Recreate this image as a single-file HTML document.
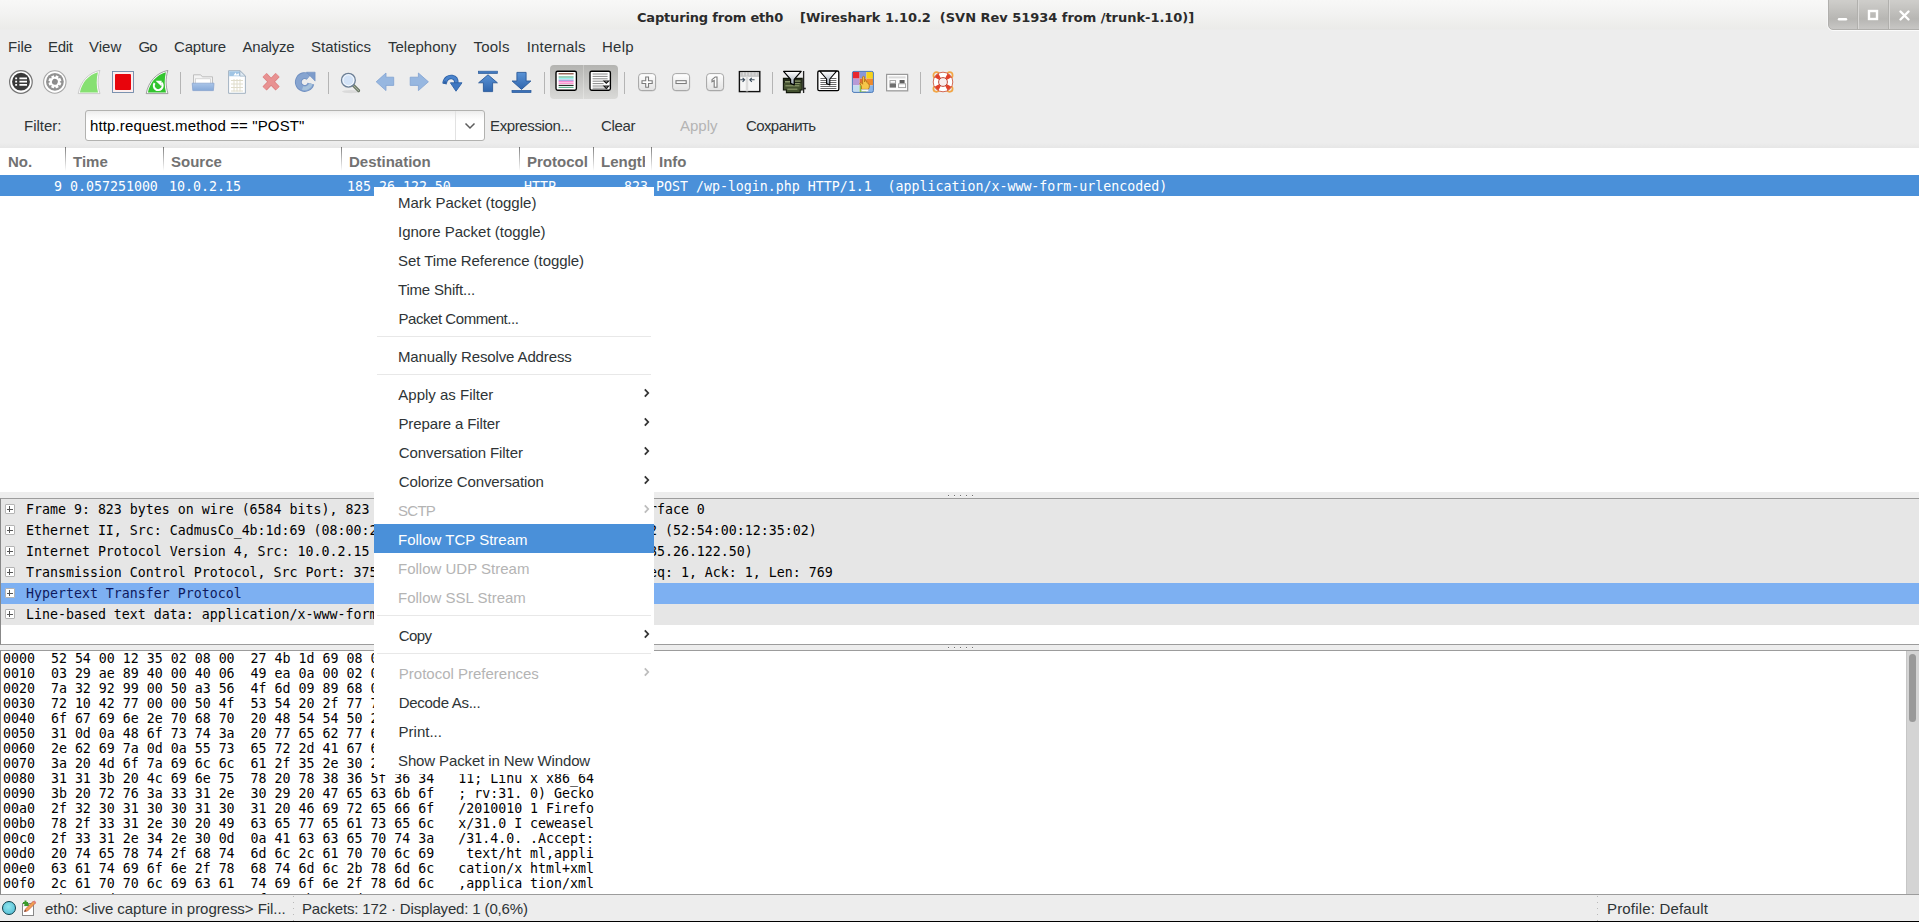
<!DOCTYPE html>
<html><head><meta charset="utf-8"><title>Wireshark</title>
<style>
html,body{margin:0;padding:0;}
body{width:1919px;height:922px;overflow:hidden;background:#ededed;position:relative;font-family:"Liberation Sans",sans-serif;font-size:15px;color:#2e3436;}
.a{position:absolute;white-space:pre;}
.t{position:absolute;white-space:pre;line-height:20px;height:20px;}
.m{position:absolute;white-space:pre;font-family:"DejaVu Sans Mono","Liberation Mono",monospace;font-size:13.288px;line-height:15px;color:#000;}
#titlebar{left:0;top:0;width:1919px;height:60px;background:linear-gradient(#f8f8f7 0px,#f3f3f2 13px,#ebebe9 29px,#ededed 30px,#ededed 60px);}
.title{font-family:"DejaVu Sans","Liberation Sans",sans-serif;font-weight:700;font-size:13px;color:#2b2b2b;top:7.5px;}
#wbtn{left:1828px;top:-6px;width:100px;height:36px;border-radius:5px;background:linear-gradient(#cecdca 6px,#b7b6b3 24px,#c9c8c6 35px);border:1px solid #b0afac;box-sizing:border-box;box-shadow:0 1px 0 #fafafa,-1px 0 0 #f6f6f6;}
.hdr{font-weight:700;color:#727272;top:152px;}
.cs{position:absolute;top:147px;width:1px;height:24px;background:linear-gradient(rgba(70,70,70,.7),rgba(110,110,110,.35) 60%,rgba(160,160,160,0));}
.sep{position:absolute;top:72px;width:1px;height:22px;background:#b4b4b4;}
.ic{position:absolute;top:70px;width:24px;height:24px;overflow:visible;}
.mi{left:398px;}
.dis{color:#b4b4b4;}
.ms{position:absolute;left:377px;width:274px;height:1px;background:#e8e8e8;}
.arr{position:absolute;left:643px;width:7px;height:10px;}
.dr{position:absolute;left:1px;width:1918px;height:21px;background:#e6e6e6;}
.dt{position:absolute;left:26px;white-space:pre;font-family:"DejaVu Sans Mono","Liberation Mono",monospace;font-size:13.288px;line-height:21px;height:21px;color:#000;}
.ex{position:absolute;left:4.5px;width:10px;height:10px;box-sizing:border-box;border:1px solid #b4b4b4;background:#fff;border-radius:1px;}
.ex:before{content:"";position:absolute;left:1px;top:3.5px;width:6px;height:1px;background:#555;}
.ex:after{content:"";position:absolute;left:3.5px;top:1px;width:1px;height:6px;background:#555;}
.hd{position:absolute;width:1px;height:1px;background:#6e6e6e;box-shadow:0 1px 0 #fafafa;}
</style></head><body>
<!-- TITLE BAR -->
<div class="a" id="titlebar"></div>
<div class="t title" style="left:637px;letter-spacing:-0.18px">Capturing from eth0</div>
<div class="t title" style="left:800px;letter-spacing:-0.03px">[Wireshark 1.10.2  (SVN Rev 51934 from /trunk-1.10)]</div>
<div class="a" id="wbtn"></div>
<div class="a" style="left:1857px;top:0;width:1px;height:29px;background:#b1b0ad"></div>
<div class="a" style="left:1858px;top:0;width:1px;height:29px;background:#d8d7d5"></div>
<div class="a" style="left:1888px;top:0;width:1px;height:29px;background:#b1b0ad"></div>
<div class="a" style="left:1889px;top:0;width:1px;height:29px;background:#d8d7d5"></div>
<svg class="a" style="left:1828px;top:0" width="91" height="29" viewBox="0 0 91 29"><g fill="none" stroke="#fff" stroke-width="2.4"><path d="M11 19.2h7" stroke-linecap="round"/><rect x="41" y="11" width="8" height="8"/><path d="M72.5 11.5l8 8M80.5 11.5l-8 8" stroke-linecap="round"/></g></svg>
<!-- MENU BAR -->
<div class="t" style="top:37px;left:8px">File</div>
<div class="t" style="top:37px;left:48px;letter-spacing:-0.3px">Edit</div>
<div class="t" style="top:37px;left:89px">View</div>
<div class="t" style="top:37px;left:138.5px;letter-spacing:-0.9px">Go</div>
<div class="t" style="top:37px;left:174px;letter-spacing:-0.2px">Capture</div>
<div class="t" style="top:37px;left:242.5px;letter-spacing:-0.2px">Analyze</div>
<div class="t" style="top:37px;left:311px">Statistics</div>
<div class="t" style="top:37px;left:388px">Telephony</div>
<div class="t" style="top:37px;left:473.5px;letter-spacing:0.22px">Tools</div>
<div class="t" style="top:37px;left:526.8px;letter-spacing:0.15px">Internals</div>
<div class="t" style="top:37px;left:602px;letter-spacing:0.25px">Help</div>
<!-- TOOLBAR -->
<svg width="0" height="0" style="position:absolute"><defs>
<linearGradient id="gb" x1="0" y1="0" x2="0" y2="1"><stop offset="0" stop-color="#5a93d6"/><stop offset="1" stop-color="#2f65ad"/></linearGradient>
<linearGradient id="gl" x1="0" y1="0" x2="0" y2="1"><stop offset="0" stop-color="#a9c4e8"/><stop offset="1" stop-color="#86a9d8"/></linearGradient>
<linearGradient id="gz" x1="0" y1="0" x2="0" y2="1"><stop offset="0" stop-color="#ffffff"/><stop offset="1" stop-color="#e2e2e2"/></linearGradient>
<linearGradient id="gf" x1="0" y1="0" x2="0" y2="1"><stop offset="0" stop-color="#ffffff"/><stop offset="1" stop-color="#9aa6b4"/></linearGradient>
<linearGradient id="gt" x1="0" y1="0" x2="0" y2="1"><stop offset="0" stop-color="#b4b4b1"/><stop offset="1" stop-color="#d9d9d7"/></linearGradient>
</defs></svg>
<!-- 1 interfaces -->
<svg class="ic" style="left:9px" viewBox="0 0 24 24"><circle cx="11.9" cy="12" r="11.3" fill="#fff" stroke="#757575" stroke-width="1.2"/><circle cx="12" cy="11.7" r="8.9" fill="#393939"/><g stroke="#fff" stroke-width="1.8"><path d="M10.4 8.3h7.6M10.4 11.6h7.6M10.4 14.8h7.6"/><path d="M6.2 8.3h1.9M6.2 11.6h1.9M6.2 14.8h1.9"/></g></svg>
<!-- 2 options -->
<svg class="ic" style="left:43px" viewBox="0 0 24 24"><circle cx="11.8" cy="12" r="11.2" fill="#fff" stroke="#a6a6a6" stroke-width="1.1"/><circle cx="11.9" cy="11.8" r="8.9" fill="#929292"/><g transform="translate(11.9 11.8) rotate(22.5)"><g fill="#fff"><circle r="4.9"/><rect x="-1.5" y="-6.5" width="3" height="13" rx="0.5"/><rect x="-1.5" y="-6.5" width="3" height="13" rx="0.5" transform="rotate(45)"/><rect x="-1.5" y="-6.5" width="3" height="13" rx="0.5" transform="rotate(90)"/><rect x="-1.5" y="-6.5" width="3" height="13" rx="0.5" transform="rotate(135)"/></g><circle r="2.9" fill="#8c8c8c"/></g></svg>
<!-- 3 start (insensitive) -->
<svg class="ic" style="left:77px" viewBox="0 0 24 24"><path d="M1.2 23.6C3.4 11.6 11.6 2.6 22.9 0.4C20.4 8.4 20.6 16 23 23.6Z" fill="#fafafa" stroke="#c2c2c2" stroke-width="0.8"/><path d="M2.9 22.4C5 12.4 11.6 4.8 20.9 2.2C19.2 9.4 19.4 16.2 21 22.4Z" fill="#86e072"/></svg>
<!-- 4 stop -->
<svg class="ic" style="left:111px" viewBox="0 0 24 24"><rect x="1.5" y="1.5" width="21" height="21" fill="#fbeeee" stroke="#6f88a8" stroke-width="0.9"/><rect x="4" y="4" width="16" height="16" rx="1" fill="#e8040c"/></svg>
<!-- 5 restart -->
<svg class="ic" style="left:145px" viewBox="0 0 24 24"><path d="M1.2 23.6C3.4 11.6 11.6 2.6 22.9 0.4C20.4 8.4 20.6 16 23 23.6Z" fill="#fafafa" stroke="#8c8c8c" stroke-width="0.8"/><path d="M2.9 22.4C5 12.4 11.6 4.8 20.9 2.2C19.2 9.4 19.4 16.2 21 22.4Z" fill="#33c42f"/><path d="M9.6 13.2a4.4 4.4 0 1 0 7 -0.4" fill="none" stroke="#fff" stroke-width="2.1"/><path d="M10.6 10.8h6v5.8z" fill="#fff"/></svg>
<div class="sep" style="left:180px"></div>
<!-- 6 open -->
<svg class="ic" style="left:191px" viewBox="0 0 24 24"><path d="M2.5 20V4.8h7.2l1.6 2h10.2V20z" fill="#f3f3f3" stroke="#b9b9b9" stroke-width="0.9"/><rect x="4.6" y="8.8" width="15" height="6" fill="#fff" stroke="#c8c8c8" stroke-width="0.7"/><path d="M1.2 13.2h21.8l-0.6 7.4H1.8z" fill="url(#gl)" stroke="#8aa6d0" stroke-width="0.8"/></svg>
<!-- 7 save -->
<svg class="ic" style="left:225px" viewBox="0 0 24 24"><path d="M3.6 0.7h11.4l5.4 5.2V23.3H3.6z" fill="#fff" stroke="#9ab" stroke-width="0.9"/><path d="M4.2 1.2h10.6l5 5H4.2z" fill="#9fc4e4"/><path d="M8.5 5.5l2-3l1.3 2.2l1.5-1.7l1 2.5z" fill="#fff"/><path d="M15 0.9v5.2h5.2z" fill="#dfeaf4" stroke="#9ab" stroke-width="0.6"/><g stroke="#e0ddcc" stroke-width="1"><path d="M6 10.5h12M6 14h12M6 17.5h12M6 21h12"/><path d="M9 9v12.5M12 9v12.5M15 9v12.5"/></g></svg>
<!-- 8 close -->
<svg class="ic" style="left:259px" viewBox="0 0 24 24"><path d="M5.6 5l13 13.4M18.6 5L5.6 18.4" stroke="#dc8080" stroke-width="5.8" stroke-linecap="butt"/><path d="M5.6 5l13 13.4M18.6 5L5.6 18.4" stroke="#e89292" stroke-width="4.2" stroke-linecap="butt"/></svg>
<!-- 9 reload -->
<svg class="ic" style="left:293px" viewBox="0 0 24 24"><path d="M15.8 7.1A6.4 6.4 0 1 0 17.9 13.7" fill="none" stroke="#6f8fc0" stroke-width="6.8"/><path d="M15.8 7.1A6.4 6.4 0 1 0 17.9 13.7" fill="none" stroke="#86a4d0" stroke-width="5.2"/><path d="M13.4 2.2h8.7v8.9z" fill="#7d9ccb" stroke="#6f8fc0" stroke-width="0.6"/><path d="M9.6 18A6.4 6.4 0 0 0 17.9 13.7" fill="none" stroke="#b4cfe0" stroke-width="3.6" opacity="0.7"/></svg>
<div class="sep" style="left:328px"></div>
<!-- 10 find -->
<svg class="ic" style="left:338px" viewBox="0 0 24 24"><ellipse cx="13" cy="21.6" rx="9" ry="1.6" fill="#000" opacity="0.08"/><path d="M15.4 15.4l5.2 5.2" stroke="#5e6b5a" stroke-width="3" stroke-linecap="round"/><path d="M15.4 15.4l5.2 5.2" stroke="#a9b3a0" stroke-width="1.1" stroke-linecap="round"/><circle cx="10.4" cy="10.2" r="6.9" fill="#d3e3f7" stroke="#6d7f94" stroke-width="1.3"/><circle cx="10.4" cy="10.2" r="5.4" fill="none" stroke="#fff" stroke-width="1" opacity="0.8"/></svg>
<!-- 11 back -->
<svg class="ic" style="left:373px" viewBox="0 0 24 24"><path d="M3.2 11.8L13 3V7.2h7.7v8.2H13V20.6z" fill="#97b7e0" stroke="#80a2d2" stroke-width="0.8" stroke-linejoin="round"/></svg>
<!-- 12 forward -->
<svg class="ic" style="left:407px" viewBox="0 0 24 24"><path d="M21.4 11.8L11.4 3V7.2H3.2v8.2h8.2V20.6z" fill="#97b7e0" stroke="#80a2d2" stroke-width="0.8" stroke-linejoin="round"/></svg>
<!-- 13 jump -->
<svg class="ic" style="left:440px" viewBox="0 0 24 24"><path d="M4.6 13.4C5.2 8 9 6.6 12 7C15.2 7.6 16.6 10 16.4 13.5" fill="none" stroke="#2f62a6" stroke-width="4.6"/><path d="M4.6 13.4C5.2 8 9 6.6 12 7C15.2 7.6 16.6 10 16.4 13.5" fill="none" stroke="#4a83cc" stroke-width="2.8"/><path d="M10.4 12.8h11.6l-6 8.4z" fill="#3f78c2" stroke="#2f62a6" stroke-width="0.9"/><path d="M2.6 13.6l2.6-3.4l1.6 4.4z" fill="#2f62a6"/></svg>
<!-- 14 top -->
<svg class="ic" style="left:476px" viewBox="0 0 24 24"><rect x="2.4" y="1.2" width="19" height="2.2" fill="url(#gb)" stroke="#2a5a9a" stroke-width="0.7"/><path d="M12 4.8l9.4 8h-4.8v8.8H7.4v-8.8H2.6z" fill="url(#gb)" stroke="#2a5a9a" stroke-width="0.9"/></svg>
<!-- 15 bottom -->
<svg class="ic" style="left:509px" viewBox="0 0 24 24"><rect x="3" y="20.4" width="19" height="2.2" fill="#3a70b8" stroke="#2a5a9a" stroke-width="0.7"/><path d="M12.5 19.4l-9.4-8.4h4.8V2.4h9.2V11h4.8z" fill="url(#gb)" stroke="#2a5a9a" stroke-width="0.9"/></svg>
<div class="sep" style="left:544px"></div>
<!-- toggles bg -->
<div class="a" style="left:550px;top:65px;width:33px;height:34px;border-radius:4px 0 0 4px;background:linear-gradient(#b4b4b1,#dadad8)"></div>
<div class="a" style="left:584px;top:65px;width:34px;height:34px;border-radius:0 4px 4px 0;background:linear-gradient(#b4b4b1,#dadad8)"></div>
<div class="a" style="left:583px;top:65px;width:1px;height:34px;background:linear-gradient(#c6c6c3,#e4e4e2)"></div>
<!-- 16 colorize -->
<svg class="ic" style="left:554px" viewBox="0 0 24 24"><rect x="2" y="1.2" width="20.4" height="19" rx="1.6" fill="#fff" stroke="#000" stroke-width="1.35"/><g stroke-width="1.15"><path d="M4.6 3.8h15" stroke="#7a3b2a"/><path d="M4.6 7h15" stroke="#4daf8a"/><path d="M4.6 8.6h15" stroke="#9af0ee"/><path d="M4.6 10.2h15" stroke="#8f8fd6"/><path d="M4.6 11.8h15" stroke="#f56ac8"/><path d="M4.6 13.4h15" stroke="#fb9ad0"/><path d="M4.6 15.4h15" stroke="#2a2a2a"/><path d="M4.6 17.4h15" stroke="#63b594"/></g></svg>
<!-- 17 autoscroll -->
<svg class="ic" style="left:588px" viewBox="0 0 24 24"><rect x="2" y="1.2" width="20.4" height="19" rx="1.6" fill="#fff" stroke="#000" stroke-width="1.35"/><g stroke="#7a7a7a" stroke-width="0.9"><path d="M4.6 4h15M4.6 6.4h15M4.6 8.8h15M4.6 11.2h11M4.6 13.6h11M4.6 16h11M4.6 18.2h15"/></g><path d="M14.6 10.4h7.4l-3.7 3.6zM14.6 15.6h7.4l-3.7 3.6z" fill="#111"/><path d="M17 11.3h2.6l-1.3 1.3zM17 16.5h2.6l-1.3 1.3z" fill="#999"/></svg>
<div class="sep" style="left:624px"></div>
<!-- 18 zoom in -->
<svg class="ic" style="left:635px" viewBox="0 0 24 24"><rect x="3.6" y="4.4" width="17" height="17" rx="3.2" fill="#cfcfcf" opacity="0.6"/><rect x="3.6" y="3.6" width="17" height="17" rx="3.2" fill="url(#gz)" stroke="#9c9c9c" stroke-width="0.9"/><path d="M10.7 7h2.8v3.7h3.7v2.8h-3.7v3.7h-2.8v-3.7H7v-2.8h3.7z" fill="#fff" stroke="#7c7c7c" stroke-width="1.1"/></svg>
<!-- 19 zoom out -->
<svg class="ic" style="left:669px" viewBox="0 0 24 24"><rect x="3.6" y="4.4" width="17" height="17" rx="3.2" fill="#cfcfcf" opacity="0.6"/><rect x="3.6" y="3.6" width="17" height="17" rx="3.2" fill="url(#gz)" stroke="#9c9c9c" stroke-width="0.9"/><rect x="7" y="10.7" width="10.2" height="2.8" fill="#fff" stroke="#7c7c7c" stroke-width="1.1"/></svg>
<!-- 20 zoom 100 -->
<svg class="ic" style="left:703px" viewBox="0 0 24 24"><rect x="3.6" y="4.4" width="17" height="17" rx="3.2" fill="#cfcfcf" opacity="0.6"/><rect x="3.6" y="3.6" width="17" height="17" rx="3.2" fill="url(#gz)" stroke="#9c9c9c" stroke-width="0.9"/><path d="M9 9.6l3.2-2.6h1.8v10.2h-2.8V10.4l-2.2 1.4z" fill="#fff" stroke="#7c7c7c" stroke-width="1.1"/></svg>
<!-- 21 resize columns -->
<svg class="ic" style="left:737px" viewBox="0 0 24 24"><rect x="2.4" y="1.6" width="20.4" height="20" fill="#f6f6f6" stroke="#111" stroke-width="1.4"/><rect x="3.2" y="2.4" width="18.8" height="3.4" fill="#c4c4c4"/><g stroke="#e9e9e9" stroke-width="0.8"><path d="M6.4 2.4v3.4M9.6 2.4v3.4M12.8 2.4v3.4M16 2.4v3.4M19.2 2.4v3.4"/></g><path d="M3.2 6.2h18.8" stroke="#a8a8a8" stroke-width="0.8"/><path d="M10 6.4v15" stroke="#dcdcdc" stroke-width="2.4"/><g stroke="#3c4c5c" stroke-width="1.1" fill="none"><path d="M3.2 9.8h4.4M5.6 7.8l2 2l-2 2"/><path d="M17.6 9.8h-4.4M14.8 7.8l-2 2l2 2"/></g></svg>
<div class="sep" style="left:772px"></div>
<!-- 22 capture filters -->
<svg class="ic" style="left:782px" viewBox="0 0 24 24"><path d="M21.6 1v22" stroke="#222" stroke-width="1.3"/><path d="M21.8 18.5h2" stroke="#222" stroke-width="1.6"/><path d="M1.4 8.4h18.8v11.6h-2v2.6H4.4v-2.6H1.4z" fill="#43512f" stroke="#10160a" stroke-width="1.1"/><path d="M2 9h17.6v4H2z" fill="#232b1a"/><g fill="#8a976a"><rect x="3" y="11" width="5" height="1.6"/><rect x="12.6" y="10.4" width="6" height="1.4"/><rect x="3.4" y="15.2" width="14" height="1.2"/><rect x="5.4" y="18.6" width="10" height="1.2"/><rect x="12.8" y="13" width="5" height="1"/></g><path d="M1.6 1.4h17.6l-7 8v5.6l-3.6 -1.6v-4z" fill="url(#gf)" stroke="#000" stroke-width="1.2" stroke-linejoin="round"/></svg>
<!-- 23 display filters -->
<svg class="ic" style="left:816px" viewBox="0 0 24 24"><rect x="1.8" y="1" width="21" height="19.6" rx="1.4" fill="#fff" stroke="#000" stroke-width="1.3"/><g stroke="#6a6a6a" stroke-width="1"><path d="M4.4 8.5h16M4.4 10.5h16M4.4 12.5h16M4.4 14.5h16M4.4 16.5h16M4.4 18.5h16"/></g><path d="M3.8 1.2h16.8l-6.8 7.8v6l-3.2 -1.4v-4.6z" fill="url(#gf)" stroke="#000" stroke-width="1.1" stroke-linejoin="round"/></svg>
<!-- 24 coloring rules -->
<svg class="ic" style="left:850px" viewBox="0 0 24 24"><rect x="2.4" y="1.4" width="21" height="21" rx="1.6" fill="#fff"/><rect x="2.8" y="1.8" width="6.8" height="6.8" fill="#e8262e"/><rect x="9.6" y="1.8" width="6.8" height="6.8" fill="#8a97d8"/><rect x="16.4" y="1.8" width="6.6" height="6.8" fill="#f6d21a"/><rect x="2.8" y="8.6" width="6.8" height="6.8" fill="#b89ad6"/><rect x="9.6" y="8.6" width="6.8" height="6.8" fill="#e06a3a"/><rect x="16.4" y="8.6" width="6.6" height="6.8" fill="#f08a2a"/><rect x="2.8" y="15.4" width="6.8" height="6.8" fill="#c4dcf0"/><rect x="9.6" y="15.4" width="6.8" height="6.8" fill="#86c94a"/><rect x="16.4" y="15.4" width="6.6" height="6.8" fill="#8ab6ea"/><rect x="2.4" y="1.4" width="21" height="21" rx="1.6" fill="none" stroke="#4a78b8" stroke-width="1"/><path d="M11.4 19.4v-3.2l-1.6-3l1.2-0.8l1.6 1.8V6.8q1-1 2 0v5.2l0.4-1.6q0.9-0.5 1.5 0.2v1.6q1-0.4 1.5 0.4v1.4q1-0.2 1.3 0.6v2.6l-1 2.2z" fill="#f6c64a" stroke="#b8741a" stroke-width="0.9" stroke-linejoin="round"/><rect x="11.4" y="19.4" width="7" height="1.8" fill="#fff" stroke="#b8b8c8" stroke-width="0.5"/></svg>
<!-- 25 preferences -->
<svg class="ic" style="left:885px" viewBox="0 0 24 24"><rect x="2.6" y="5.2" width="21" height="16.4" fill="#cfcfcf" opacity="0.5"/><rect x="1.6" y="4.4" width="21" height="16.4" fill="#fcfcfc" stroke="#9a9a9a" stroke-width="1.2"/><rect x="3.6" y="6.4" width="17" height="2" fill="#d9d9d9"/><rect x="5" y="10.6" width="5.6" height="2.6" fill="#fff" stroke="#9a9a9a" stroke-width="0.9"/><rect x="4.6" y="13.6" width="6.4" height="4" fill="#6e6e6e"/><rect x="14.6" y="10" width="5" height="3.4" fill="#5e5e5e"/><rect x="13.6" y="13.8" width="7" height="3.8" fill="#fff" stroke="#9a9a9a" stroke-width="0.9"/></svg>
<div class="sep" style="left:920px"></div>
<!-- 26 help -->
<svg class="ic" style="left:931px" viewBox="0 0 24 24"><g fill="none" stroke="#f2a646" stroke-width="1.7"><circle cx="5.4" cy="5.2" r="3"/><circle cx="18.6" cy="5.2" r="3"/><circle cx="5.4" cy="18.8" r="3"/><circle cx="18.6" cy="18.8" r="3"/></g><circle cx="12" cy="12" r="7.1" fill="none" stroke="#fff" stroke-width="5"/><g fill="none" stroke="#e2402a" stroke-width="5"><path d="M15.44 5.79A7.1 7.1 0 0 1 18.21 8.56"/><path d="M18.21 15.44A7.1 7.1 0 0 1 15.44 18.21"/><path d="M8.56 18.21A7.1 7.1 0 0 1 5.79 15.44"/><path d="M5.79 8.56A7.1 7.1 0 0 1 8.56 5.79"/></g><circle cx="12" cy="12" r="9.8" fill="none" stroke="#d05a44" stroke-width="0.9"/><circle cx="12" cy="12" r="4.4" fill="#f8eeee" stroke="#c04a3a" stroke-width="1"/></svg>
<!-- FILTER BAR -->
<div class="t" style="top:116px;left:24px">Filter:</div>
<div class="a" style="left:85px;top:110px;width:400px;height:31px;box-sizing:border-box;border:1px solid #b2b2b0;border-radius:3px;background:linear-gradient(#ececec,#f6f6f6 4px,#fff 10px,#fff);"></div>
<div class="a" style="left:455px;top:111px;width:1px;height:29px;background:#e2e2e2"></div>
<div class="t" style="top:116px;left:90px;color:#000;letter-spacing:0.13px">http.request.method == "POST"</div>
<svg class="a" style="left:463.7px;top:122px" width="12" height="8" viewBox="0 0 12 8"><path d="M1.5 1.5 L6 6 L10.5 1.5" fill="none" stroke="#5c5c5c" stroke-width="1.5"/></svg>
<div class="t" style="top:116px;left:490px;letter-spacing:-0.37px">Expression...</div>
<div class="t" style="top:116px;left:601px;letter-spacing:-0.35px">Clear</div>
<div class="t dis" style="top:116px;left:680px">Apply</div>
<div class="t" style="top:116px;left:746px;letter-spacing:-0.55px">Сохранить</div>
<!-- PACKET LIST -->
<div class="a" style="left:0;top:143px;width:1919px;height:5px;background:linear-gradient(#ededed,#e6e6e6)"></div>
<div class="a" style="left:0;top:148px;width:1919px;height:344px;background:#fff"></div>
<div class="t hdr" style="left:8px">No.</div>
<div class="t hdr" style="left:73px">Time</div>
<div class="t hdr" style="left:171px">Source</div>
<div class="t hdr" style="left:349px">Destination</div>
<div class="t hdr" style="left:527px">Protocol</div>
<div class="t hdr" style="left:601px;width:43.5px;overflow:hidden">Length</div>
<div class="t hdr" style="left:659px">Info</div>
<div class="cs" style="left:65px"></div>
<div class="cs" style="left:163px"></div>
<div class="cs" style="left:341px"></div>
<div class="cs" style="left:519px"></div>
<div class="cs" style="left:593px"></div>
<div class="cs" style="left:651px"></div>
<div class="a" style="left:0;top:175px;width:1919px;height:21px;background:#4a90d9"></div>
<div class="m" style="left:54px;top:178.5px;color:#fff">9</div>
<div class="m" style="left:70px;top:178.5px;color:#fff">0.057251000</div>
<div class="m" style="left:169px;top:178.5px;color:#fff">10.0.2.15</div>
<div class="m" style="left:347px;top:178.5px;color:#fff">185.26.122.50</div>
<div class="m" style="left:524px;top:178.5px;color:#fff">HTTP</div>
<div class="m" style="left:624px;top:178.5px;color:#fff">823</div>
<div class="m" style="left:656px;top:178.5px;color:#fff">POST /wp-login.php HTTP/1.1  (application/x-www-form-urlencoded)</div>
<!-- DETAILS -->
<div class="hd" style="left:948px;top:495px"></div>
<div class="hd" style="left:948px;top:647px"></div>
<div class="hd" style="left:954px;top:495px"></div>
<div class="hd" style="left:954px;top:647px"></div>
<div class="hd" style="left:960px;top:495px"></div>
<div class="hd" style="left:960px;top:647px"></div>
<div class="hd" style="left:966px;top:495px"></div>
<div class="hd" style="left:966px;top:647px"></div>
<div class="hd" style="left:972px;top:495px"></div>
<div class="hd" style="left:972px;top:647px"></div>
<div class="a" style="left:0;top:498px;width:1919px;height:147px;box-sizing:border-box;border:1px solid #9c9c9c;border-left-color:#888;border-right:none;background:#fff"></div>
<div class="dr" style="top:499px"></div><div class="ex" style="top:504px"></div><div class="dt" style="top:499px">Frame 9: 823 bytes on wire (6584 bits), 823 bytes captured (6584 bits) on interface 0</div>
<div class="dr" style="top:520px"></div><div class="ex" style="top:525px"></div><div class="dt" style="top:520px">Ethernet II, Src: CadmusCo_4b:1d:69 (08:00:27:4b:1d:69), Dst: RealtekU_12:35:02 (52:54:00:12:35:02)</div>
<div class="dr" style="top:541px"></div><div class="ex" style="top:546px"></div><div class="dt" style="top:541px">Internet Protocol Version 4, Src: 10.0.2.15 (10.0.2.15), Dst: 185.26.122.50 (185.26.122.50)</div>
<div class="dr" style="top:562px"></div><div class="ex" style="top:567px"></div><div class="dt" style="top:562px">Transmission Control Protocol, Src Port: 37512 (37512), Dst Port: http (80), Seq: 1, Ack: 1, Len: 769</div>
<div class="dr" style="top:583px;background:#7db0f2"></div><div class="ex" style="top:588px"></div><div class="dt" style="top:583px;color:#0e1a5e">Hypertext Transfer Protocol</div>
<div class="dr" style="top:604px"></div><div class="ex" style="top:609px"></div><div class="dt" style="top:604px">Line-based text data: application/x-www-form-urlencoded</div>
<!-- HEX -->
<div class="a" style="left:0;top:650px;width:1919px;height:245px;box-sizing:border-box;border:1px solid #9c9c9c;border-left-color:#888;border-right:none;background:#fff;overflow:hidden">
<div class="m" style="left:2px;top:0px">0000  52 54 00 12 35 02 08 00  27 4b 1d 69 08 00 45 00   RT..5... &#x27;K.i..E.</div>
<div class="m" style="left:2px;top:15px">0010  03 29 ae 89 40 00 40 06  49 ea 0a 00 02 0f b9 1a   .)..@.@. I.......</div>
<div class="m" style="left:2px;top:30px">0020  7a 32 92 99 00 50 a3 56  4f 6d 09 89 68 02 9e 02   z2...P.V Om..h...</div>
<div class="m" style="left:2px;top:45px">0030  72 10 42 77 00 00 50 4f  53 54 20 2f 77 70 2d 6c   r.Bw..PO ST /wp-l</div>
<div class="m" style="left:2px;top:60px">0040  6f 67 69 6e 2e 70 68 70  20 48 54 54 50 2f 31 2e   ogin.php  HTTP/1.</div>
<div class="m" style="left:2px;top:75px">0050  31 0d 0a 48 6f 73 74 3a  20 77 65 62 77 6f 72 6b   1..Host:  webwork</div>
<div class="m" style="left:2px;top:90px">0060  2e 62 69 7a 0d 0a 55 73  65 72 2d 41 67 65 6e 74   .biz..Us er-Agent</div>
<div class="m" style="left:2px;top:105px">0070  3a 20 4d 6f 7a 69 6c 6c  61 2f 35 2e 30 20 28 58   : Mozill a/5.0 (X</div>
<div class="m" style="left:2px;top:120px">0080  31 31 3b 20 4c 69 6e 75  78 20 78 38 36 5f 36 34   11; Linu x x86_64</div>
<div class="m" style="left:2px;top:135px">0090  3b 20 72 76 3a 33 31 2e  30 29 20 47 65 63 6b 6f   ; rv:31. 0) Gecko</div>
<div class="m" style="left:2px;top:150px">00a0  2f 32 30 31 30 30 31 30  31 20 46 69 72 65 66 6f   /2010010 1 Firefo</div>
<div class="m" style="left:2px;top:165px">00b0  78 2f 33 31 2e 30 20 49  63 65 77 65 61 73 65 6c   x/31.0 I ceweasel</div>
<div class="m" style="left:2px;top:180px">00c0  2f 33 31 2e 34 2e 30 0d  0a 41 63 63 65 70 74 3a   /31.4.0. .Accept:</div>
<div class="m" style="left:2px;top:195px">00d0  20 74 65 78 74 2f 68 74  6d 6c 2c 61 70 70 6c 69    text/ht ml,appli</div>
<div class="m" style="left:2px;top:210px">00e0  63 61 74 69 6f 6e 2f 78  68 74 6d 6c 2b 78 6d 6c   cation/x html+xml</div>
<div class="m" style="left:2px;top:225px">00f0  2c 61 70 70 6c 69 63 61  74 69 6f 6e 2f 78 6d 6c   ,applica tion/xml</div>
<div class="m" style="left:2px;top:241px">0100  3b 71 3d 30 2e 39 2c 2a  2f 2a 3b 71 3d 30 2e 38   ;q=0.9,* /*;q=0.8</div>
</div>
<div class="a" style="left:1906px;top:651px;width:13px;height:243px;background:#d4d4d4;border-left:1px solid #c6c6c6;box-sizing:border-box"></div>
<div class="a" style="left:1909px;top:654px;width:7px;height:68px;border-radius:3.5px;background:#999"></div>
<!-- STATUS BAR -->
<div class="a" style="left:0;top:895px;width:1919px;height:26px;background:#ededed"></div>
<div class="a" style="left:0;top:921px;width:1919px;height:1px;background:#000"></div>
<div class="a" style="left:2px;top:901px;width:14px;height:14px;box-sizing:border-box;border-radius:7px;border:1.3px solid #0c3f4a;background:radial-gradient(circle at 45% 40%,#8fe6ee,#5cc2d8 75%)"></div>
<svg class="a" style="left:20px;top:899px" width="18" height="18" viewBox="0 0 18 18"><rect x="2.5" y="4.5" width="11" height="12" fill="#fff" stroke="#888" /><path d="M3 5h10v3H3z" fill="#eee"/><path d="M4 7l3 -4l3 4" fill="#3a9a2a"/><path d="M5.5 1.5v5M3 4h5" stroke="#3a9a2a" stroke-width="2"/><path d="M4.5 12.5l1-2.5l8-8l2 2l-8 8z" fill="#f0a050" stroke="#c9604a" stroke-width="0.8"/><path d="M13 2.5l1.5-1l1.7 1.7l-1 1.5z" fill="#e08080"/><path d="M4.3 12.7l.7-1.7l1 1z" fill="#222"/></svg>
<div class="t" style="top:899px;left:45px;letter-spacing:-0.05px">eth0: &lt;live capture in progress&gt; Fil...</div>
<div class="t" style="top:899px;left:302px;letter-spacing:-0.15px">Packets: 172 · Displayed: 1 (0,6%)</div>
<div class="t" style="top:899px;left:1607px;letter-spacing:0.17px">Profile: Default</div>
<svg class="a" style="left:292px;top:896px" width="3" height="25" viewBox="0 0 3 25"><g fill="#b9b9b9"><rect x="1" y="0" width="1" height="1"/><rect x="1" y="6" width="1" height="1"/><rect x="1" y="12" width="1" height="1"/><rect x="1" y="18" width="1" height="1"/><rect x="1" y="24" width="1" height="1"/></g></svg>
<svg class="a" style="left:1596px;top:896px" width="3" height="25" viewBox="0 0 3 25"><g fill="#b9b9b9"><rect x="1" y="0" width="1" height="1"/><rect x="1" y="6" width="1" height="1"/><rect x="1" y="12" width="1" height="1"/><rect x="1" y="18" width="1" height="1"/><rect x="1" y="24" width="1" height="1"/></g></svg>
<!-- CONTEXT MENU -->
<div class="a" style="left:374px;top:187px;width:280px;height:587px;background:#fff"></div>
<div class="t mi" style="top:192.5px">Mark Packet (toggle)</div>
<div class="t mi" style="top:221.5px">Ignore Packet (toggle)</div>
<div class="t mi" style="top:250.5px;letter-spacing:-0.06px">Set Time Reference (toggle)</div>
<div class="t mi" style="top:279.5px;letter-spacing:-0.2px">Time Shift...</div>
<div class="t mi" style="top:308.5px;letter-spacing:-0.45px;left:398.5px">Packet Comment...</div>
<div class="ms" style="top:336px"></div>
<div class="t mi" style="top:346.5px;letter-spacing:-0.13px">Manually Resolve Address</div>
<div class="ms" style="top:374px"></div>
<div class="t mi" style="top:384.5px;left:398.3px">Apply as Filter</div>
<svg class="arr" style="top:388px" viewBox="0 0 7 10"><path d="M1.8 1.4L5.2 5L1.8 8.6" fill="none" stroke="#333" stroke-width="1.8"/></svg>
<div class="t mi" style="top:413.5px;letter-spacing:-0.13px;left:398.5px">Prepare a Filter</div>
<svg class="arr" style="top:417px" viewBox="0 0 7 10"><path d="M1.8 1.4L5.2 5L1.8 8.6" fill="none" stroke="#333" stroke-width="1.8"/></svg>
<div class="t mi" style="top:442.5px;letter-spacing:-0.1px;left:398.8px">Conversation Filter</div>
<svg class="arr" style="top:446px" viewBox="0 0 7 10"><path d="M1.8 1.4L5.2 5L1.8 8.6" fill="none" stroke="#333" stroke-width="1.8"/></svg>
<div class="t mi" style="top:471.5px;letter-spacing:-0.13px;left:398.8px">Colorize Conversation</div>
<svg class="arr" style="top:475px" viewBox="0 0 7 10"><path d="M1.8 1.4L5.2 5L1.8 8.6" fill="none" stroke="#333" stroke-width="1.8"/></svg>
<div class="t mi dis" style="top:500.5px;letter-spacing:-0.72px">SCTP</div>
<svg class="arr" style="top:504px" viewBox="0 0 7 10"><path d="M1.8 1.4L5.2 5L1.8 8.6" fill="none" stroke="#bdbdbd" stroke-width="1.8"/></svg>
<div class="a" style="left:374px;top:524px;width:280px;height:29px;background:#4a90d9"></div>
<div class="t mi" style="top:529.5px;color:#fff">Follow TCP Stream</div>
<div class="t mi dis" style="top:558.5px">Follow UDP Stream</div>
<div class="t mi dis" style="top:587.5px">Follow SSL Stream</div>
<div class="ms" style="top:615px"></div>
<div class="t mi" style="top:625.5px;letter-spacing:-0.6px;left:398.8px">Copy</div>
<svg class="arr" style="top:629px" viewBox="0 0 7 10"><path d="M1.8 1.4L5.2 5L1.8 8.6" fill="none" stroke="#333" stroke-width="1.8"/></svg>
<div class="ms" style="top:653px"></div>
<div class="t mi dis" style="top:663.5px;left:398.8px">Protocol Preferences</div>
<svg class="arr" style="top:667px" viewBox="0 0 7 10"><path d="M1.8 1.4L5.2 5L1.8 8.6" fill="none" stroke="#bdbdbd" stroke-width="1.8"/></svg>
<div class="t mi" style="top:692.5px;letter-spacing:-0.3px;left:398.8px">Decode As...</div>
<div class="t mi" style="top:721.5px;left:398.6px">Print...</div>
<div class="t mi" style="top:750.5px;letter-spacing:-0.12px">Show Packet in New Window</div>
</body></html>
